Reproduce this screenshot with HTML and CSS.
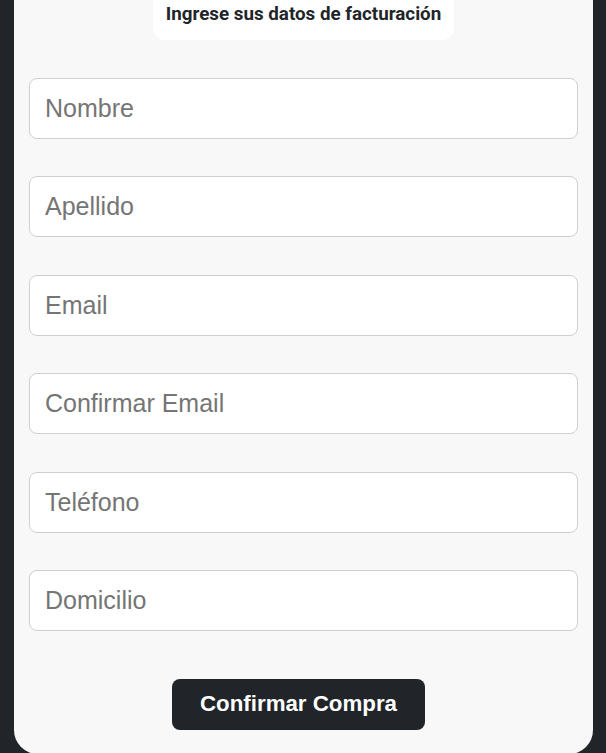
FILE: index.html
```html
<!DOCTYPE html>
<html lang="es">
<head>
<meta charset="utf-8">
<title>Facturación</title>
<link rel="stylesheet" href="styles.css">
</head>
<body>
<main class="panel">
  <div class="title-box"><h2 class="title">Ingrese sus datos de facturación</h2></div>
  <form class="form">
    <input class="field" type="text" placeholder="Nombre">
    <input class="field" type="text" placeholder="Apellido">
    <input class="field" type="email" placeholder="Email">
    <input class="field" type="email" placeholder="Confirmar Email">
    <input class="field" type="tel" placeholder="Teléfono">
    <input class="field" type="text" placeholder="Domicilio">
    <div class="actions"><button class="btn" type="button">Confirmar Compra</button></div>
  </form>
</main>
</body>
</html>
```
FILE: styles.css
```css
html, body {
  margin: 0;
  padding: 0;
  background: #212529;
  height: 100%;
  overflow: hidden;
}
.panel {
  width: 579px;
  margin-left: 14px;
  height: 754px;
  background: #f8f8f8;
  border-radius: 0 0 24px 24px;
  display: flex;
  flex-direction: column;
  align-items: stretch;
}
.title-box {
  align-self: center;
  background: #ffffff;
  border-radius: 0 0 12px 12px;
  padding: 0 13px;
  height: 40px;
  box-sizing: border-box;
}
.title {
  margin: 0;
  font-family: Roboto, "Liberation Sans", sans-serif;
  font-weight: 700;
  font-size: 18.8px;
  line-height: 28px;
  color: #212529;
  white-space: nowrap;
}
.form {
  margin-top: 38px;
  padding: 0 15px;
  display: flex;
  flex-direction: column;
  gap: 37.4px;
}
.field {
  height: 61px;
  box-sizing: border-box;
  width: 100%;
  border: 1px solid #cfcfcf;
  border-radius: 8px;
  background: #ffffff;
  padding: 0 15px;
  font-family: "Liberation Sans", Arial, sans-serif;
  font-size: 25px;
  color: #212529;
  outline: none;
}
.field::placeholder {
  color: #757575;
  opacity: 1;
}
.actions {
  margin-top: 10.6px;
  display: flex;
}
.btn {
  margin-left: 143px;
  width: 253px;
  height: 51px;
  border: none;
  border-radius: 8px;
  background: #212529;
  color: #ffffff;
  font-family: "Liberation Sans", Arial, sans-serif;
  font-weight: 700;
  font-size: 22.3px;
  padding: 0;
  cursor: pointer;
}
```
